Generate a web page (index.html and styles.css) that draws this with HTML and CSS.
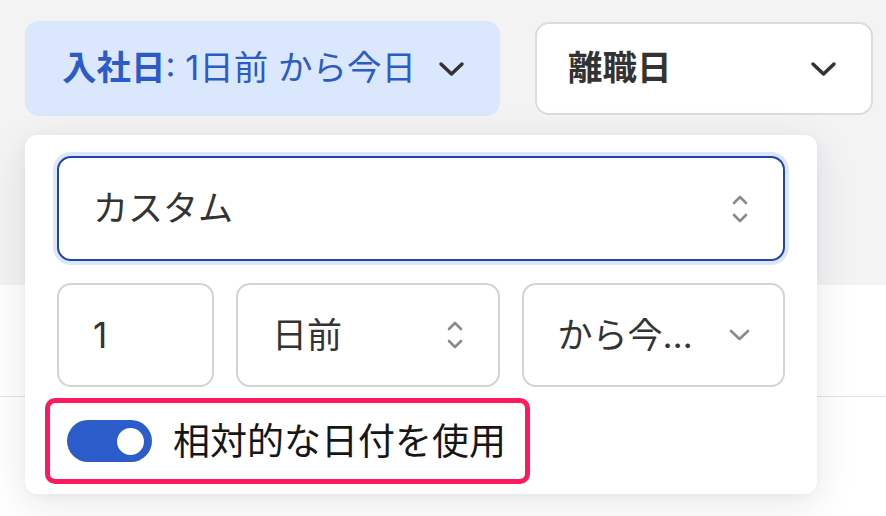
FILE: index.html
```html
<!DOCTYPE html>
<html lang="ja">
<head>
<meta charset="utf-8">
<title>Filters</title>
<link rel="stylesheet" href="styles.css">
</head>
<body>
<div class="page">
  <div class="filters">
    <button class="filter filter-active">
      <span class="filter-label"><b>入社日</b>:&nbsp;1日前 から今日</span>
      <svg class="chev" viewBox="0 0 27 16" width="27" height="16"><path d="M3 3 L13.5 13 L24 3"/></svg>
    </button>
    <button class="filter filter-plain">
      <span class="filter-label"><b>離職日</b></span>
      <svg class="chev" viewBox="0 0 27 16" width="27" height="16"><path d="M3 3 L13.5 13 L24 3"/></svg>
    </button>
  </div>

  <div class="table">
    <div class="table-row"></div>
  </div>

  <div class="popover">
    <div class="select select-focus">
      <span class="select-text">カスタム</span>
      <svg class="updown" viewBox="0 0 16 30" width="16" height="30"><path d="M2 9 L8 3 L14 9"/><path d="M2 21 L8 27 L14 21"/></svg>
    </div>
    <div class="row">
      <div class="select"><span class="select-text">1</span></div>
      <div class="select">
        <span class="select-text">日前</span>
        <svg class="updown" viewBox="0 0 16 30" width="16" height="30"><path d="M2 9 L8 3 L14 9"/><path d="M2 21 L8 27 L14 21"/></svg>
      </div>
      <div class="select">
        <span class="select-text truncate">から今日</span>
        <svg class="down" viewBox="0 0 21 12" width="21" height="12"><path d="M2 2 L10.5 10 L19 2"/></svg>
      </div>
    </div>
    <div class="highlight">
      <span class="toggle"><span class="knob"></span></span>
      <span class="toggle-label">相対的な日付を使用</span>
    </div>
  </div>
</div>
</body>
</html>
```

FILE: styles.css
```css
* { box-sizing: border-box; }
html, body { margin: 0; padding: 0; }
body {
  width: 886px;
  height: 516px;
  overflow: hidden;
  background: #f3f3f4;
  font-family: Inter, "Noto Sans CJK JP", sans-serif;
  color: #333;
}
.page {
  position: relative;
  height: 516px;
  overflow: hidden;
}
.filters {
  display: flex;
  gap: 35px;
  padding: 21px 0 0 25px;
}
.filter {
  display: flex;
  align-items: center;
  justify-content: space-between;
  height: 95px;
  border-radius: 14px;
  font-family: inherit;
  font-size: 34.5px;
  line-height: 1;
  cursor: pointer;
}
.filter b { font-weight: 700; }
.filter-active {
  width: 475px;
  padding: 0 35px 0 37px;
  background: #dbe7fd;
  border: none;
  color: #2b5cc6;
}
.filter-plain {
  width: 338px;
  margin-top: 1px;
  height: 93px;
  padding: 0 34px 0 31px;
  background: #fff;
  border: 2px solid #dcdcdc;
  color: #333;
}
.chev {
  fill: none;
  stroke: #333;
  stroke-width: 3.5;
  stroke-linecap: round;
  stroke-linejoin: round;
  flex: none;
}
.table {
  margin-top: 169px;
  background: #fff;
  height: 231px;
}
.table-row {
  height: 112px;
  border-bottom: 1px solid #e2e2e5;
}
.popover {
  position: absolute;
  left: 25px;
  top: 135px;
  width: 792px;
  padding: 21px 32px 10px;
  background: #fff;
  border-radius: 12px;
  box-shadow: 0 10px 40px rgba(30, 30, 60, 0.10), 0 2px 8px rgba(30, 30, 60, 0.04);
}
.select {
  display: flex;
  align-items: center;
  justify-content: space-between;
  height: 104px;
  padding: 0 35px 0 34px;
  border: 2px solid #d7d3d3;
  border-radius: 14px;
  background: #fff;
  font-size: 35px;
  line-height: 1;
  color: #333;
}
.select-focus {
  height: 105px;
  border-color: #1f45a8;
  box-shadow: 0 0 0 4px #dce7fc;
}
.select-text {
  white-space: nowrap;
}
.truncate {
  display: block;
  width: 136px;
  overflow: hidden;
  text-overflow: ellipsis;
}
.updown, .down {
  fill: none;
  stroke: #8a8a8a;
  stroke-width: 2.6;
  stroke-linecap: round;
  stroke-linejoin: round;
  flex: none;
}
.down { margin-right: -2px; }
.row {
  display: grid;
  grid-template-columns: 157px 1fr 1fr;
  gap: 22px;
  margin-top: 22px;
}
.highlight {
  display: flex;
  align-items: center;
  gap: 21px;
  width: fit-content;
  height: 86px;
  margin: 11px 0 0 -12px;
  padding: 0 19px 0 17px;
  border: 5px solid #ff1a5d;
  border-radius: 10px;
}
.toggle {
  position: relative;
  display: block;
  width: 85px;
  height: 42px;
  border-radius: 21px;
  background: #2c5cc9;
  flex: none;
}
.knob {
  position: absolute;
  right: 8px;
  top: 7.5px;
  width: 27px;
  height: 27px;
  border-radius: 50%;
  background: #fff;
}
.toggle-label {
  font-size: 37px;
  line-height: 1;
  color: #161616;
  white-space: nowrap;
}
```
